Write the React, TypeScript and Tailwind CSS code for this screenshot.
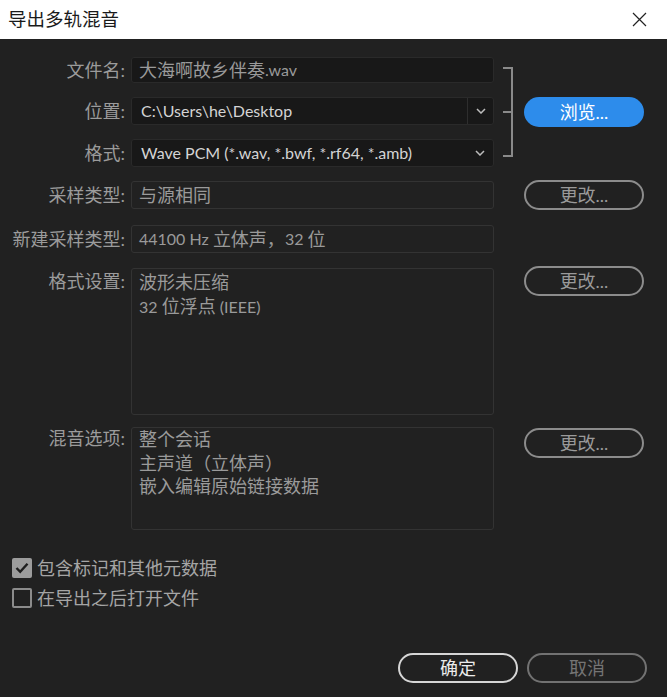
import React from "react";

const font = { fontFamily: "Lato, 'Noto Sans CJK SC', sans-serif" };

function Chevron() {
  return (
    <svg width="10" height="6" viewBox="0 0 10 6" fill="none">
      <path d="M1 1 L5 5 L9 1" stroke="#bdbdbd" strokeWidth="1.5" />
    </svg>
  );
}

function OutlineBtn({ children, cls }: { children: React.ReactNode; cls: string }) {
  return (
    <button
      className={
        "w-[120px] h-[30px] shrink-0 rounded-full border-2 flex items-center justify-center text-[18px] leading-none " +
        cls
      }
    >
      {children}
    </button>
  );
}

function Label({ children, cls = "" }: { children: React.ReactNode; cls?: string }) {
  return (
    <div className={"w-[125px] shrink-0 text-right text-[18px] text-[#9b9b9b] " + cls}>
      {children}
    </div>
  );
}

function L({ children }: { children: React.ReactNode }) {
  return <span className="text-[16px]">{children}</span>;
}

export default function App() {
  return (
    <div className="w-[667px] h-[697px] bg-[#212121] flex flex-col" style={font}>
      <div className="h-[39px] bg-white flex items-center justify-between pl-[8px] pr-[20px] shrink-0">
        <span className="text-[18.5px] text-[#1a1a1a]">导出多轨混音</span>
        <svg width="15" height="15" viewBox="0 0 15 15">
          <path d="M1 1 L14 14 M14 1 L1 14" stroke="#222" strokeWidth="1.2" />
        </svg>
      </div>

      <div className="flex-1 flex flex-col pt-[18px]">
        {/* top group */}
        <div className="flex items-center">
          <div className="flex flex-col gap-[14px]">
            <div className="flex items-center h-[26px]">
              <Label>文件名:</Label>
              <div className="ml-[6px] w-[363px] h-[26px] bg-[#181818] border border-[#2a2a2a] rounded-[3px] flex items-center pl-[7px] text-[18px] text-[#9a9a9a]">
                大海啊故乡伴奏<L>.wav</L>
              </div>
            </div>
            <div className="flex items-center h-[28px]">
              <Label>位置:</Label>
              <div className="ml-[6px] w-[363px] h-[28px] bg-[#181818] border border-[#2a2a2a] rounded-[3px] flex items-center text-[16px] text-[#d4d4d4]">
                <div className="flex-1 pl-[9px]">C:\Users\he\Desktop</div>
                <div className="w-[26px] h-full border-l border-[#2e2e2e] flex items-center justify-center">
                  <Chevron />
                </div>
              </div>
            </div>
            <div className="flex items-center h-[28px]">
              <Label>格式:</Label>
              <div className="ml-[6px] w-[363px] h-[28px] bg-[#181818] border border-[#2a2a2a] rounded-[3px] flex items-center text-[16px] text-[#d4d4d4]">
                <div className="flex-1 pl-[9px]">Wave PCM (*.wav, *.bwf, *.rf64, *.amb)</div>
                <div className="w-[26px] h-full flex items-center justify-center">
                  <Chevron />
                </div>
              </div>
            </div>
          </div>
          <div className="ml-[9px] w-[10px] h-[90px] border-y-2 border-r-2 border-[#8a8a8a] flex items-center">
            <div className="w-full h-[2px] bg-[#8a8a8a]" />
          </div>
          <button className="ml-[11px] w-[120px] h-[30px] rounded-full bg-[#2d8ceb] text-white text-[18px] leading-none flex items-center justify-center">
            浏览...
          </button>
        </div>

        {/* sample type */}
        <div className="flex items-center mt-[13px] h-[30px]">
          <Label>采样类型:</Label>
          <div className="ml-[6px] w-[363px] h-[28px] border border-[#333333] rounded-[3px] flex items-center pl-[7px] text-[18px] text-[#9a9a9a]">
            与源相同
          </div>
          <OutlineBtn cls="ml-[30px] border-[#8c8c8c] text-[#9a9a9a]">更改...</OutlineBtn>
        </div>

        <div className="flex items-center mt-[15px] h-[28px]">
          <Label>新建采样类型:</Label>
          <div className="ml-[6px] w-[363px] h-[28px] border border-[#333333] rounded-[3px] flex items-center pl-[7px] text-[18px] text-[#9a9a9a] whitespace-pre">
            <L>44100 Hz </L>立体声，<L>32 </L>位
          </div>
        </div>

        <div className="flex items-start mt-[15px] h-[147px]">
          <Label cls="pt-[1px] leading-[24px]">格式设置:</Label>
          <div className="ml-[6px] w-[363px] h-[147px] border border-[#333333] rounded-[3px] pl-[7px] pt-[1px] text-[18px] leading-[24px] text-[#9a9a9a]">
            <div>波形未压缩</div>
            <div className="whitespace-pre">
              <L>32 </L>位浮点<L> (IEEE)</L>
            </div>
          </div>
          <OutlineBtn cls="ml-[30px] -mt-[2px] border-[#8c8c8c] text-[#9a9a9a]">更改...</OutlineBtn>
        </div>

        <div className="flex items-start mt-[12px] h-[103px]">
          <Label cls="leading-[23.5px]">混音选项:</Label>
          <div className="ml-[6px] w-[363px] h-[103px] border border-[#333333] rounded-[3px] pl-[7px] text-[18px] leading-[23.5px] text-[#9a9a9a]">
            <div>整个会话</div>
            <div>主声道（立体声）</div>
            <div>嵌入编辑原始链接数据</div>
          </div>
          <OutlineBtn cls="ml-[30px] mt-[1px] border-[#8c8c8c] text-[#9a9a9a]">更改...</OutlineBtn>
        </div>

        {/* checkboxes */}
        <div className="flex flex-col gap-[10px] mt-[28px] pl-[12px]">
          <div className="flex items-center h-[20px]">
            <div className="w-[20px] h-[20px] rounded-[2px] bg-[#9c9c9c] flex items-center justify-center">
              <svg width="14" height="12" viewBox="0 0 14 12">
                <path d="M1.5 6 L5.2 9.8 L12.5 1.8" stroke="#1e1e1e" strokeWidth="2.4" fill="none" />
              </svg>
            </div>
            <span className="ml-[5px] text-[18px] text-[#a5a5a5]">包含标记和其他元数据</span>
          </div>
          <div className="flex items-center h-[20px]">
            <div className="w-[20px] h-[20px] rounded-[2px] border-2 border-[#8c8c8c]" />
            <span className="ml-[5px] text-[18px] text-[#a5a5a5]">在导出之后打开文件</span>
          </div>
        </div>

        <div className="mt-auto flex justify-end gap-[9px] pr-[20px] pb-[14px]">
          <OutlineBtn cls="border-[#d6d6d6] text-[#ececec]">确定</OutlineBtn>
          <OutlineBtn cls="border-[#727272] text-[#747474]">取消</OutlineBtn>
        </div>
      </div>
    </div>
  );
}
